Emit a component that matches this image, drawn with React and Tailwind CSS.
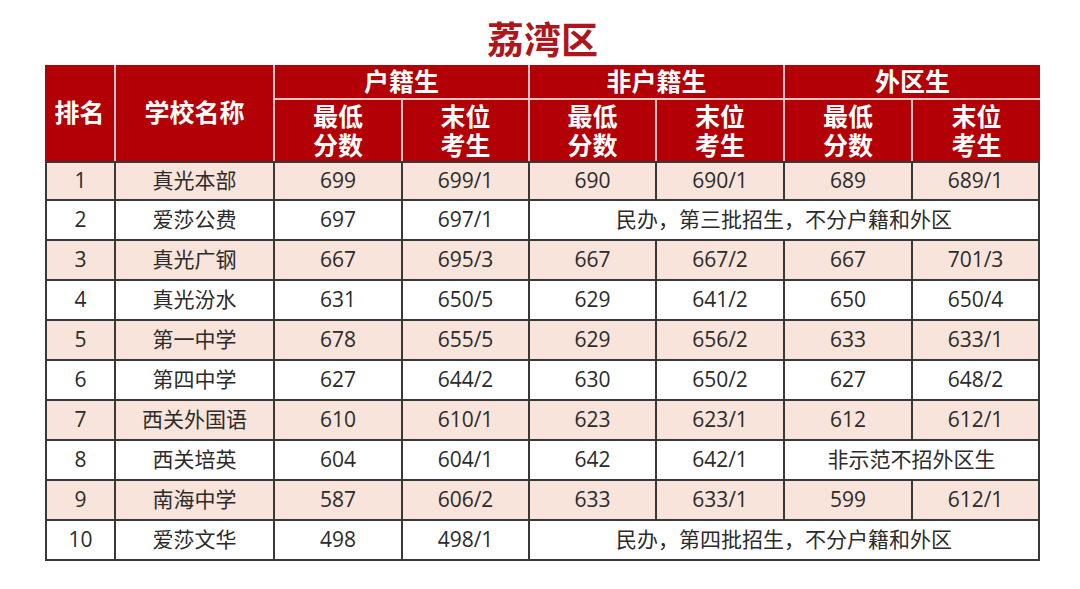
const rows = [
  { rank: "1", name: "真光本部", cells: ["699", "699/1", "690", "690/1", "689", "689/1"] },
  { rank: "2", name: "爱莎公费", cells: ["697", "697/1"], note: "民办，第三批招生，不分户籍和外区" },
  { rank: "3", name: "真光广钢", cells: ["667", "695/3", "667", "667/2", "667", "701/3"] },
  { rank: "4", name: "真光汾水", cells: ["631", "650/5", "629", "641/2", "650", "650/4"] },
  { rank: "5", name: "第一中学", cells: ["678", "655/5", "629", "656/2", "633", "633/1"] },
  { rank: "6", name: "第四中学", cells: ["627", "644/2", "630", "650/2", "627", "648/2"] },
  { rank: "7", name: "西关外国语", cells: ["610", "610/1", "623", "623/1", "612", "612/1"] },
  { rank: "8", name: "西关培英", cells: ["604", "604/1", "642", "642/1"], tail: "非示范不招外区生" },
  { rank: "9", name: "南海中学", cells: ["587", "606/2", "633", "633/1", "599", "612/1"] },
  { rank: "10", name: "爱莎文华", cells: ["498", "498/1"], note: "民办，第四批招生，不分户籍和外区" },
];

const cols = "grid-cols-[71px_159px_128px_127px_127px_128px_128px_127px]";

function HeadCell({ children, className = "" }) {
  return (
    <div
      className={`flex flex-col items-center justify-center bg-[#b20006] text-white font-bold text-[25px] text-center border-[#f4c3c3] ${className}`}
    >
      {children}
    </div>
  );
}

function Cell({ children, first, top, bg, className = "" }) {
  return (
    <div
      className={`flex items-center justify-center h-[40px] border-[#383838] border-b-2 border-r-2 ${
        first ? "border-l-2" : ""
      } ${top ? "border-t-2" : ""} ${bg} ${className}`}
    >
      {children}
    </div>
  );
}

export default function App() {
  return (
    <div
      className="w-[1080px] h-[589px] bg-white overflow-hidden"
      style={{ fontFamily: '"Open Sans", "Noto Sans CJK SC", sans-serif' }}
    >
      <div className="pl-[45px] pt-[19px] w-[1040px]">
        <h1 className="text-center text-[37px] leading-[42px] font-bold text-[#ad161d] mb-[4px]">
          荔湾区
        </h1>

        {/* header */}
        <div className={`grid ${cols} grid-rows-[35px_61px]`}>
          <HeadCell className="row-span-2 border-r-2">排名</HeadCell>
          <HeadCell className="row-span-2 border-r-2">学校名称</HeadCell>
          <HeadCell className="col-span-2 border-r-2 border-b-2">户籍生</HeadCell>
          <HeadCell className="col-span-2 border-r-2 border-b-2">非户籍生</HeadCell>
          <HeadCell className="col-span-2 border-b-2">外区生</HeadCell>
          {[0, 1, 2].map((g) => (
            <>
              <HeadCell key={`a${g}`} className="border-r-2">
                <span className="leading-[29px]">最低</span>
                <span className="leading-[29px]">分数</span>
              </HeadCell>
              <HeadCell key={`b${g}`} className={g < 2 ? "border-r-2" : ""}>
                <span className="leading-[29px]">末位</span>
                <span className="leading-[29px]">考生</span>
              </HeadCell>
            </>
          ))}
        </div>

        {/* body */}
        <div className={`grid ${cols} text-[21px] text-[#2b2b2b]`}>
          {rows.map((r, i) => {
            const bg = i % 2 === 0 ? "bg-[#f8e4da]" : "bg-white";
            const top = i === 0;
            return (
              <>
                <Cell key={`r${i}`} first top={top} bg={bg}>{r.rank}</Cell>
                <Cell key={`n${i}`} top={top} bg={bg}>{r.name}</Cell>
                {r.cells.map((c, j) => (
                  <Cell key={`c${i}-${j}`} top={top} bg={bg}>{c}</Cell>
                ))}
                {r.note && (
                  <Cell key={`note${i}`} top={top} bg={bg} className="col-span-4">
                    {r.note}
                  </Cell>
                )}
                {r.tail && (
                  <Cell key={`tail${i}`} top={top} bg={bg} className="col-span-2">
                    {r.tail}
                  </Cell>
                )}
              </>
            );
          })}
        </div>
      </div>
    </div>
  );
}
